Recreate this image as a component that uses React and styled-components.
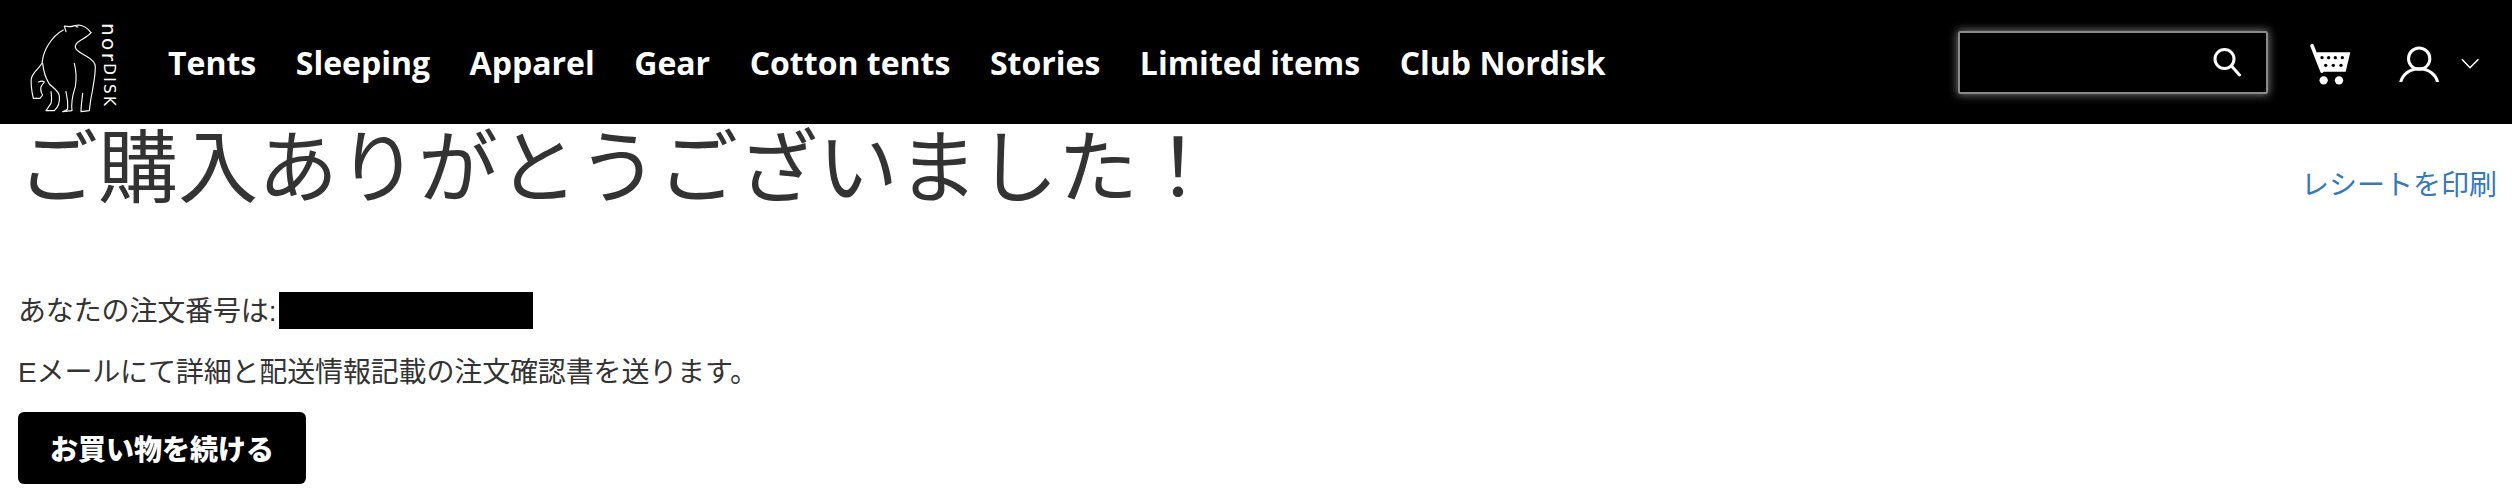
import React from "react";
import styled, { createGlobalStyle } from "styled-components";

const Global = createGlobalStyle`
  html, body {
    margin: 0;
    background: #fff;
    font-family: "Liberation Sans", "Noto Sans CJK JP", sans-serif;
    color: #333;
  }
`;

const Header = styled.header`
  display: flex;
  align-items: center;
  height: 124px;
  background: #000;
  padding: 0 32px 0 26px;
`;

const Logo = styled.a`
  display: flex;
  align-items: flex-start;
  width: 142px;
  height: 124px;
  color: #fff;

  svg {
    margin-top: 20px;
    width: 72px;
    height: 96px;
  }
`;

const LogoWord = styled.span`
  writing-mode: vertical-rl;
  margin: 23px 0 0 4px;
  font: 400 15px/13px "DejaVu Sans", sans-serif;
  letter-spacing: 2.4px;
  white-space: nowrap;

  b {
    font-size: 20px;
    font-weight: 400;
  }
`;

const Nav = styled.nav`
  display: flex;
  gap: 39.5px;
  flex: 1;
  margin-top: 1px;
`;

const NavItem = styled.a`
  color: #fff;
  font: 700 32px/40px "Open Sans", sans-serif;
  white-space: nowrap;
`;

const SearchBox = styled.div`
  display: flex;
  align-items: center;
  justify-content: flex-end;
  box-sizing: border-box;
  width: 310px;
  height: 63px;
  padding-right: 25px;
  margin-right: 39px;
  border: 2px solid #8a8a8a;
  border-radius: 2px;
  box-shadow: 0 0 8px 1px rgba(255, 255, 255, 0.45);
  color: #fff;
`;

const IconButton = styled.span`
  display: flex;
  align-items: center;
  color: #fff;
  margin-right: ${(p) => p.$gap || 0}px;
  margin-top: ${(p) => p.$top || 0}px;
`;

const Main = styled.main`
  padding: 0 15px 0 18px;
`;

const TitleRow = styled.div`
  display: flex;
  justify-content: space-between;
  align-items: flex-end;
  height: 90px;
`;

const Title = styled.h1`
  margin: 0;
  font-size: 80px;
  font-weight: 400;
  line-height: 90px;
  color: #333;
`;

const PrintLink = styled.a`
  color: #3579bb;
  font-size: 28px;
  line-height: 40px;
  margin-bottom: 8px;
`;

const Text = styled.p`
  display: flex;
  align-items: center;
  margin: ${(p) => p.$top}px 0 0;
  font-size: 28px;
  line-height: 40px;
  letter-spacing: -0.15px;
`;

const Redacted = styled.span`
  display: inline-block;
  width: 254px;
  height: 37px;
  margin: 0 0 3px 3px;
  background: #000;
`;

const Button = styled.button`
  display: block;
  width: 288px;
  height: 72px;
  margin-top: 19px;
  border: 0;
  border-radius: 6px;
  background: #000;
  color: #fff;
  font-family: inherit;
  font-size: 28px;
  font-weight: 900;
`;

const BearLogo = () => (
  <svg viewBox="0 0 216 288" fill="none" stroke="currentColor" strokeWidth="3.4" strokeLinecap="round" strokeLinejoin="round">
    <path d="M195 38C186 26 172 16 158 15C148 15 140 20 130 20L115 18L120 35" />
    <path d="M112 30C96 38 78 56 66 76C56 92 50 112 48 130C40 145 22 155 16 175C14 195 18 218 22 235L42 235L50 225C44 216 43 206 46 198L55 186C50 182 44 183 38 186" />
    <path d="M195 38C190 46 175 54 165 60C155 66 146 72 148 82C150 92 165 100 180 108C198 118 208 126 208 140C208 170 200 210 194 240L190 272L165 275C165 258 168 240 170 220" />
    <path d="M50 130C52 150 56 170 70 192C84 206 98 212 100 228C102 245 96 262 85 272L60 272L75 250C78 240 77 228 75 215" />
    <path d="M145 130C150 150 152 175 148 200C142 220 134 240 138 272L110 275L125 268C126 250 124 232 120 215" />
    <path d="M150 20L156 21" />
  </svg>
);

const SearchIcon = () => (
  <svg width="28" height="30" viewBox="0 0 28 30" fill="none" stroke="currentColor" strokeWidth="3" strokeLinecap="round">
    <circle cx="11.5" cy="12" r="9.5" />
    <path d="M18.5 19L26.5 28" />
  </svg>
);

const CartIcon = () => (
  <svg width="45" height="44" viewBox="50 78 135 132">
    <path d="M65 92L95 168" stroke="#fff" strokeWidth="11" strokeLinecap="round" />
    <path d="M78 112H180L166 170H94z" fill="#fff" />
    <g fill="#000">
      <circle cx="95" cy="128" r="5" /><circle cx="115" cy="128" r="5" /><circle cx="135" cy="128" r="5" /><circle cx="156" cy="128" r="5" />
      <circle cx="106" cy="151" r="5" /><circle cx="129" cy="151" r="5" /><circle cx="152" cy="151" r="5" />
    </g>
    <circle cx="100" cy="196" r="12.500" fill="#fff" />
    <circle cx="146" cy="196" r="12.500" fill="#fff" />
  </svg>
);

const UserIcon = () => (
  <svg width="42" height="36" viewBox="325 92 125 108" fill="none" stroke="#fff" strokeWidth="9">
    <circle cx="388" cy="130" r="32" />
    <path d="M332 204C336 178 360 160 388 160C416 160 440 178 444 204" />
  </svg>
);

const Chevron = () => (
  <svg width="20" height="11" viewBox="510 128 60 34" fill="none" stroke="#fff" strokeWidth="5">
    <path d="M515 132L540 158L566 132" />
  </svg>
);

const links = ["Tents", "Sleeping", "Apparel", "Gear", "Cotton tents", "Stories", "Limited items", "Club Nordisk"];

export default function App() {
  return (
    <>
      <Global />
      <Header>
        <Logo>
          <BearLogo />
          <LogoWord><b>nor</b>DISK</LogoWord>
        </Logo>
        <Nav>
          {links.map((l) => (
            <NavItem key={l}>{l}</NavItem>
          ))}
        </Nav>
        <SearchBox>
          <SearchIcon />
        </SearchBox>
        <IconButton $gap={46} $top={2}><CartIcon /></IconButton>
        <IconButton $gap={20} $top={4}><UserIcon /></IconButton>
        <IconButton $top={3}><Chevron /></IconButton>
      </Header>
      <Main>
        <TitleRow>
          <Title>ご購入ありがとうございました！</Title>
          <PrintLink>レシートを印刷</PrintLink>
        </TitleRow>
        <Text $top={78}>
          あなたの注文番号は:
          <Redacted />
        </Text>
        <Text $top={21}>Eメールにて詳細と配送情報記載の注文確認書を送ります。</Text>
        <Button>お買い物を続ける</Button>
      </Main>
    </>
  );
}
